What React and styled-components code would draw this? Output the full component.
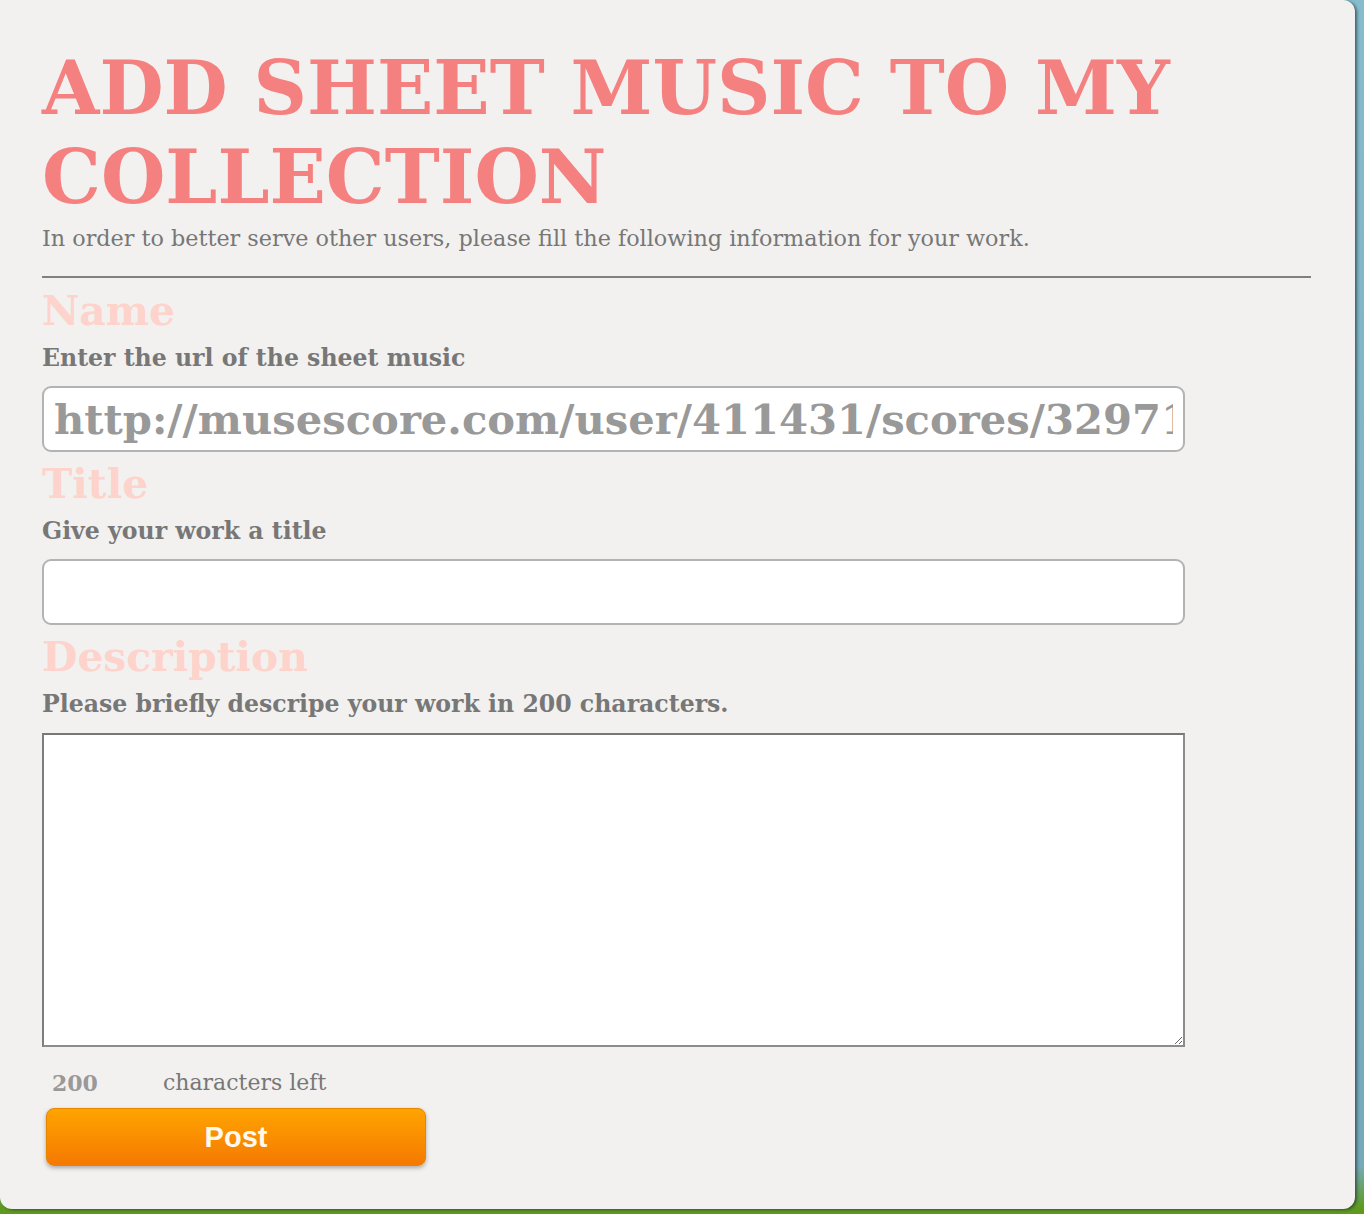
import styled, { createGlobalStyle } from 'styled-components'

const GlobalStyle = createGlobalStyle`
  html, body {
    margin: 0;
    padding: 0;
  }
  body {
    min-height: 1214px;
    background: linear-gradient(to bottom, #86bccb 0%, #76aabb 96%, #5f9a1e 99.5%);
    font-family: 'DejaVu Serif', Georgia, serif;
  }
`

const Card = styled.div`
  width: 1355px;
  box-sizing: border-box;
  padding: 44px 44px 43px 42px;
  background: #f2f1ef;
  border-radius: 0 12px 12px 12px;
  box-shadow: 2px 1px 3px rgba(20, 40, 50, 0.6);
`

const PageTitle = styled.h1`
  margin: 0;
  font-size: 74px;
  line-height: 89px;
  font-weight: 700;
  color: #f48080;
`

const Lead = styled.p`
  margin: 1px 0 0;
  font-size: 22.3px;
  line-height: 30px;
  color: #777;
`

const Divider = styled.hr`
  margin: 23px 0 0;
  border: 0;
  height: 2px;
  background: #808080;
`

const Field = styled.section`
  display: flex;
  flex-direction: column;
  align-items: flex-start;
  margin-top: ${({ first }) => (first ? '9px' : '8px')};
`

const FieldName = styled.h2`
  margin: 0;
  font-size: 40.8px;
  line-height: 48px;
  font-weight: 700;
  color: #fdd3cb;
`

const Hint = styled.label`
  margin-top: 8px;
  font-size: 23.6px;
  line-height: 30px;
  font-weight: 700;
  color: #777;
`

const TextInput = styled.input`
  margin-top: 13px;
  width: 1143px;
  height: 66px;
  box-sizing: border-box;
  padding: 0 10px;
  border: 2px solid #b3b3b3;
  border-radius: 9px;
  background: #fff;
  font-family: 'DejaVu Serif', Georgia, serif;
  font-size: 41.7px;
  font-weight: 700;
  color: #999;
  outline: none;

  &::placeholder {
    color: #999;
    opacity: 1;
  }
`

const TextArea = styled.textarea`
  margin-top: 14px;
  width: 1143px;
  height: 314px;
  box-sizing: border-box;
  border: 2px solid #8c8c8c;
  border-top-color: #777;
  border-left-color: #7e7e7e;
  background: #fff;
  font-family: 'DejaVu Serif', Georgia, serif;
  font-size: 20px;
  outline: none;
`

const Counter = styled.div`
  display: flex;
  margin-top: 21px;
  font-size: 22px;
  line-height: 30px;
  color: #777;
`

const Count = styled.span`
  width: 111px;
  padding-left: 10px;
  font-weight: 700;
  color: #999;
`

const PostButton = styled.button`
  display: block;
  margin: 10px 0 0 4px;
  width: 380px;
  height: 58px;
  border: 1px solid #e48600;
  border-radius: 8px;
  background: linear-gradient(to bottom, #ffa400, #f57900);
  box-shadow: 0 2px 4px rgba(0, 0, 0, 0.3);
  font-family: 'Liberation Sans', Arial, sans-serif;
  font-size: 29px;
  font-weight: 700;
  color: #fff8ee;
  cursor: pointer;
`

const fields = [
  {
    id: 'name',
    name: 'Name',
    hint: 'Enter the url of the sheet music',
    placeholder: 'http://musescore.com/user/411431/scores/3297101'
  },
  {
    id: 'title',
    name: 'Title',
    hint: 'Give your work a title',
    placeholder: ''
  }
]

export default function App() {
  return (
    <>
      <GlobalStyle />
      <Card>
        <PageTitle>ADD SHEET MUSIC TO MY COLLECTION</PageTitle>
        <Lead>
          In order to better serve other users, please fill the following
          information for your work.
        </Lead>
        <Divider />
        {fields.map(({ id, name, hint, placeholder }, i) => (
          <Field key={id} first={i === 0 ? 'true' : undefined}>
            <FieldName>{name}</FieldName>
            <Hint htmlFor={id}>{hint}</Hint>
            <TextInput id={id} type='text' placeholder={placeholder} />
          </Field>
        ))}
        <Field>
          <FieldName>Description</FieldName>
          <Hint htmlFor='description'>
            Please briefly descripe your work in 200 characters.
          </Hint>
          <TextArea id='description' maxLength={200} />
        </Field>
        <Counter>
          <Count>200</Count>
          <span>characters left</span>
        </Counter>
        <PostButton type='button'>Post</PostButton>
      </Card>
    </>
  )
}
